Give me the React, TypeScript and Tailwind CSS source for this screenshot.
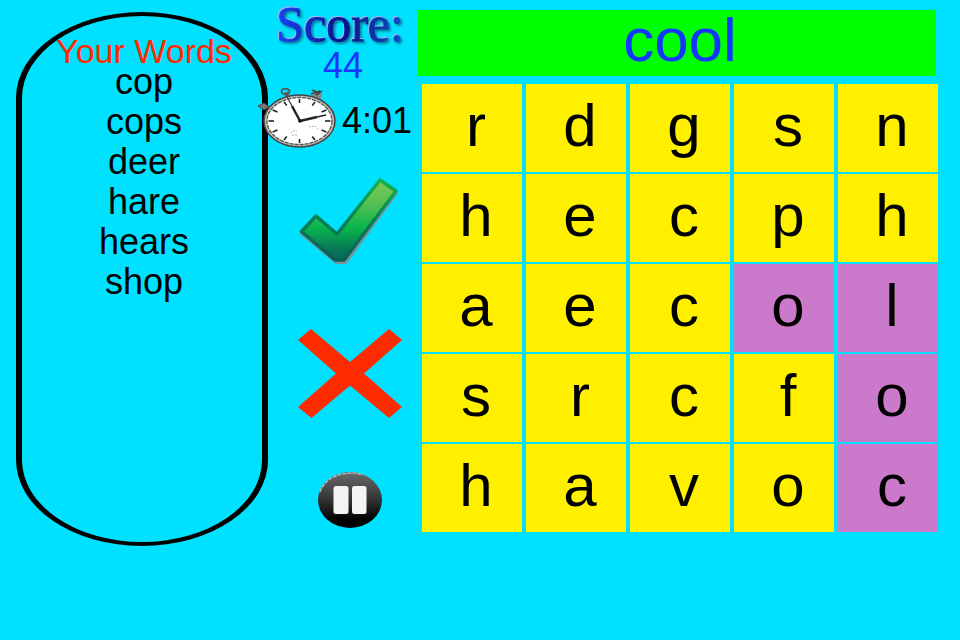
import React from "react";

const words = ["cop", "cops", "deer", "hare", "hears", "shop"];
const rows = ["rdgsn", "hecph", "aecol", "srcfo", "havoc"];
const picked = new Set(["2-3", "2-4", "3-4", "4-4"]);

function Stopwatch() {
  const ticks = Array.from({ length: 12 }, (_, i) => {
    const a = (i * Math.PI) / 6;
    const c = Math.cos(a);
    const s = Math.sin(a);
    return (
      <line
        key={i}
        x1={41.5 + c * 25.5}
        y1={33 + s * 18}
        x2={41.5 + c * 31}
        y2={33 + s * 22}
      />
    );
  });
  return (
    <svg className="h-[61px] w-20 shrink-0" viewBox="0 0 80 61" aria-hidden="true">
      <path d="M0 18l6-3 5 4-5 3z" fill="#777" stroke="#444" strokeWidth="1" />
      <path d="M53 9l4-5 7 2-2 6z" fill="#888" />
      <path d="M54 2l7 3M53 6l9-3M58 7l6-4" stroke="#444" strokeWidth="1.8" />
      <path d="M30 10l-2-6" stroke="#666" strokeWidth="4" />
      <ellipse cx="27.500" cy="3.500" rx="4" ry="2.800" fill="none" stroke="#555" strokeWidth="1.8" />
      <ellipse cx="41.500" cy="33" rx="35.500" ry="26" fill="#c4beb8" stroke="#444" strokeWidth="1.5" />
      <ellipse cx="41.500" cy="33" rx="32.500" ry="23.500" fill="#fff" stroke="#555" strokeWidth="1.3" strokeDasharray="4 1" />
      <g stroke="#222" strokeWidth="1.6">{ticks}</g>
      <path d="M33 45q3-4 6-1M34 47h5M51 39l6-1 3 3" stroke="#aaa" strokeWidth="1" strokeDasharray="2 1" fill="none" />
      <path d="M42 33L34 18" stroke="#222" strokeWidth="2.400" />
      <path d="M34 18l-5-9" stroke="#444" strokeWidth="1.3" />
      <path d="M42 33l17-4" stroke="#222" strokeWidth="2.400" />
      <path d="M59 29l9-2" stroke="#222" strokeWidth="1.6" />
      <circle cx="42" cy="33" r="1.800" fill="#111" />
    </svg>
  );
}

function CheckIcon() {
  return (
    <svg className="h-[90px] w-[104px]" viewBox="0 0 104 90" aria-hidden="true">
      <defs>
        <linearGradient id="check-fill" x1="0" y1="0" x2="0" y2="1">
          <stop offset="0" stopColor="#7cca55" />
          <stop offset="0.3" stopColor="#55c054" />
          <stop offset="0.6" stopColor="#08b54c" />
          <stop offset="0.85" stopColor="#087a56" />
          <stop offset="1" stopColor="#07665a" />
        </linearGradient>
        <linearGradient id="check-edge" x1="0" y1="0" x2="0" y2="1">
          <stop offset="0" stopColor="#16b34c" />
          <stop offset="0.5" stopColor="#078052" />
          <stop offset="1" stopColor="#075f58" />
        </linearGradient>
      </defs>
      <path
        d="M3 57L19 41L40 58L83 5L99 16L48 86H38Z"
        fill="#7795a0"
        stroke="#7795a0"
        strokeWidth="2"
        strokeLinejoin="round"
      />
      <path
        d="M3.500 54.500L18 39L39 57L82 3L98 14L46 83H37Z"
        fill="url(#check-fill)"
        stroke="url(#check-edge)"
        strokeWidth="3.500"
        strokeLinejoin="round"
      />
    </svg>
  );
}

function CrossIcon() {
  return (
    <svg className="h-[90px] w-[104px]" viewBox="0 0 104 90" aria-hidden="true">
      <path
        d="M13 0L52 33L91 0L104 11L66 44.500L104 78L91 89L52 56.500L13.500 89L0 78L38 44.500L0 11Z"
        fill="#ff2b00"
      />
    </svg>
  );
}

function PauseIcon() {
  return (
    <svg className="h-[57px] w-[66px]" viewBox="0 0 66 57" aria-hidden="true">
      <defs>
        <linearGradient id="pause-fill" x1="0" y1="0" x2="0" y2="1">
          <stop offset="0" stopColor="#6a6a6a" />
          <stop offset="0.5" stopColor="#333" />
          <stop offset="0.85" stopColor="#000" />
        </linearGradient>
      </defs>
      <ellipse cx="33" cy="28" rx="32" ry="28" fill="url(#pause-fill)" />
      <path d="M3 20Q9 4 29 1.500Q38 0 46 3" fill="none" stroke="#b5b5b5" strokeWidth="1.500" strokeDasharray="4 1" />
      <rect x="16.500" y="14" width="15" height="28" rx="2.500" fill="#f4f4f4" />
      <rect x="35" y="14" width="14.500" height="28" rx="2.500" fill="#f4f4f4" />
    </svg>
  );
}

export default function App() {
  return (
    <main className="flex min-h-screen items-start bg-[#00e1ff] pr-[22px] pl-4 font-['Liberation_Sans',Arial,sans-serif] text-black">
      <section className="mt-3 min-h-[534px] w-[252px] shrink-0 rounded-[50%/86px] border-x-[6px] border-y-4 border-black pt-6 text-center">
        <h2 className="pl-1 text-[34px] leading-[22px] whitespace-nowrap text-[#ff2b00]">Your Words</h2>
        <ul className="pl-1 text-[36px] leading-10">
          {words.map((word) => (
            <li key={word}>{word}</li>
          ))}
        </ul>
      </section>

      <section className="flex w-[150px] shrink-0 flex-col items-center">
        <h1 className="bg-linear-to-r from-[#1744f5] via-[#07128a] to-[#1258c8] bg-clip-text pr-1.5 font-['Liberation_Serif',serif] text-[50px] leading-[48px] text-transparent [filter:drop-shadow(-1px_-1px_0px_#a9b4f5)_drop-shadow(2px_2px_1px_#0a7f9c)] [-webkit-text-stroke:1px_transparent]">
          Score:
        </h1>
        <p className="text-[36px] leading-9 text-[#1437ff]">44</p>
        <div className="mt-1 -ml-2.5 flex items-center gap-1 self-start">
          <Stopwatch />
          <time className="pt-1 text-[36px] leading-9">4:01</time>
        </div>
        <div className="flex flex-col items-center pl-3.5">
          <button type="button" aria-label="Submit word" className="mt-7 cursor-pointer">
            <CheckIcon />
          </button>
          <button type="button" aria-label="Clear word" className="mt-[62px] cursor-pointer">
            <CrossIcon />
          </button>
          <button type="button" aria-label="Pause" className="mt-[53px] cursor-pointer">
            <PauseIcon />
          </button>
        </div>
      </section>

      <section className="min-w-0 flex-1 pt-2.5">
        <output className="mr-0.5 flex h-[66px] items-center justify-center bg-[#00ff00] pb-1.5 pl-1.5 text-[62px] leading-none text-[#1437ff]">
          cool
        </output>
        <div className="mt-2 ml-1 grid grid-cols-5 gap-x-1 gap-y-0.5">
          {rows.flatMap((row, r) =>
            [...row].map((letter, c) => {
              const on = picked.has(`${r}-${c}`);
              return (
                <button
                  key={`${r}-${c}`}
                  type="button"
                  aria-pressed={on}
                  className={`flex h-[88px] cursor-pointer items-center justify-center pb-1 pl-2 text-[60px] leading-none ${
                    on ? "bg-[#cb7acb]" : "bg-[#fff000]"
                  }`}
                >
                  {letter}
                </button>
              );
            })
          )}
        </div>
      </section>
    </main>
  );
}
